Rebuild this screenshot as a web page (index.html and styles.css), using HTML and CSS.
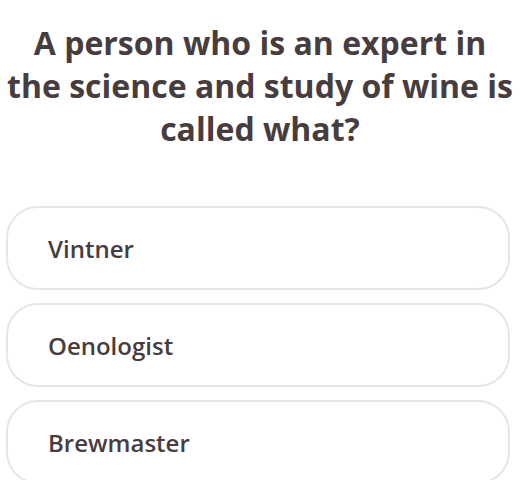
FILE: index.html
```html
<!DOCTYPE html>
<html>
<head>
<meta charset="utf-8">
<link rel="stylesheet" href="styles.css">
</head>
<body>
<div class="quiz">
  <h1 class="question">A person who is an expert in<br>the science and study of wine is<br>called what?</h1>
  <div class="options">
    <div class="option">Vintner</div>
    <div class="option">Oenologist</div>
    <div class="option">Brewmaster</div>
  </div>
</div>
</body>
</html>
```
FILE: styles.css
```css
html, body {
  margin: 0;
  padding: 0;
  background: #ffffff;
}
body {
  font-family: "Open Sans", "Lato", sans-serif;
  color: #473d3f;
  overflow: hidden;
  height: 480px;
}
.quiz {
  display: flex;
  flex-direction: column;
}
.question {
  margin: 0;
  padding: 21px 0 0;
  font-size: 32px;
  line-height: 43px;
  font-weight: 700;
  text-align: center;
  white-space: nowrap;
}
.options {
  display: flex;
  flex-direction: column;
  gap: 13px;
  padding: 56px 10px 0 6px;
}
.option {
  height: 80px;
  border: 2px solid #e8e5e5;
  border-radius: 32px;
  display: flex;
  align-items: center;
  padding-left: 40px;
  font-size: 24px;
  font-weight: 600;
}
```
